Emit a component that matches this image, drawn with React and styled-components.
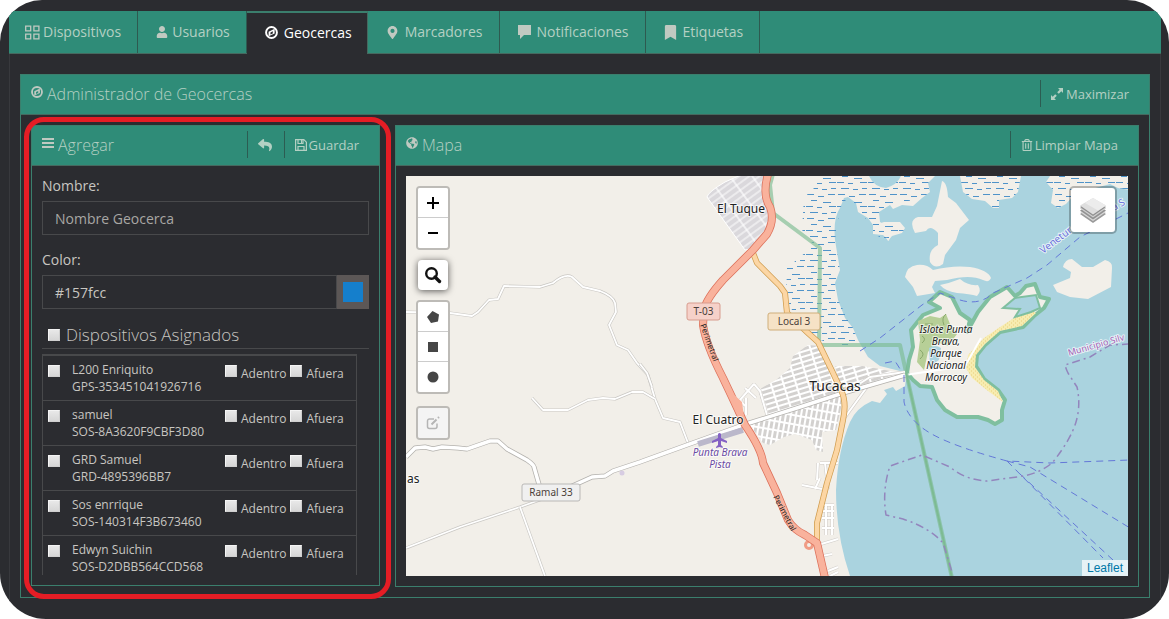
import React, { useState } from 'react';
import styled, { createGlobalStyle, css } from 'styled-components';
import {
  FaBookmark,
  FaGlobeAmericas,
  FaMapMarkerAlt,
  FaRegTrashAlt,
  FaReply,
  FaUser,
} from 'react-icons/fa';

const GlobalStyle = createGlobalStyle`
  :root {
    --green: #2f8c78;
    --green-line: #3b7f6d;
    --dark: #2b2c30;
    --line: #48494b;
    --text: #c8c6c1;
    --on-green: #b4d0c3;
    --font-sm: 12px;
    --font-md: 13px;
    --font-base: 14px;
    --font-lg: 16px;
    --font-xl: 17px;
  }

  * {
    box-sizing: border-box;
  }

  body {
    margin: 0;
    background: white;
    color: var(--text);
    font-family: 'Open Sans', 'Noto Sans', sans-serif;
    font-size: var(--font-base);
    line-height: 20px;
  }

  button,
  input {
    font: inherit;
    color: inherit;
    margin: 0;
  }
`;

const Page = styled.div`
  display: flex;
  flex-direction: column;
  min-height: 100vh;
  padding: 11px 8px 0 9px;
  overflow: hidden;
  background: var(--dark);
  border-radius: 42px 42px 46px 46px;
`;

const TabBar = styled.nav`
  display: flex;
  height: 43px;
  background: var(--green);
  border-bottom: 1px solid #46695f;
`;

const Tab = styled.a`
  display: flex;
  align-items: center;
  gap: 3px;
  height: 42px;
  padding: 0 16px;
  border-right: 1px solid #2e5a50;
  color: var(--on-green);
  text-decoration: none;

  ${({ $active }) =>
    $active &&
    css`
      height: 43px;
      padding: 0 15px 2px 16px;
      border-top: 2px solid var(--green-line);
      border-right-color: #46695f;
      background: var(--dark);
      color: white;
    `}
`;

const TabIcon = styled.span`
  display: flex;
  justify-content: center;
  width: ${({ $wide }) => ($wide ? '18px' : '15px')};
  color: ${({ $active }) => ($active ? 'white' : '#c0c9c1')};
`;

const Content = styled.main`
  flex: 1;
  padding: 20px 10px;
  border: 1px solid #38393d;
  border-width: 0 1px;
`;

const Panel = styled.section`
  position: relative;
  min-width: 0;
  border: 1px solid var(--green-line);
`;

const PanelHeader = styled.header`
  display: flex;
  align-items: center;
  justify-content: space-between;
  height: 40px;
  padding: 0 10px 2px;
  background: var(--green);
  border-bottom: 1px solid #46695f;
  color: #c0c9c1;
`;

const PanelTitle = styled.h2`
  display: flex;
  align-items: center;
  gap: 4px;
  margin: 0;
  color: var(--on-green);
  font-size: var(--font-lg);
  font-weight: 300;

  svg {
    margin-bottom: 4px;
    color: #c0c9c1;
  }
`;

const Actions = styled.div`
  display: flex;
`;

const Action = styled.button`
  display: flex;
  align-items: center;
  gap: 2px;
  min-width: 37px;
  height: 27px;
  padding: 0 10px;
  background: none;
  border: 0;
  border-left: 1px solid #2c5c52;
  color: var(--on-green);
  font-size: var(--font-md);
  cursor: pointer;
`;

const PanelBody = styled.div`
  padding: 10px;
`;

const Columns = styled.div`
  display: grid;
  grid-template-columns: 349px minmax(0, 1fr);
  align-items: start;
  gap: 15px;
  padding: 10px;
`;

const Highlight = styled.div`
  position: absolute;
  inset: -9px -12px -14px -8px;
  border: 5px solid #e51d25;
  border-radius: 20px;
  pointer-events: none;
`;

const Field = styled.div`
  display: flex;
  flex-direction: column;
  gap: 5px;
  margin-bottom: 15px;
`;

const InputGroup = styled.div`
  display: flex;
`;

const TextInput = styled.input`
  flex: 1;
  min-width: 0;
  height: 34px;
  padding: 0 12px;
  background: var(--dark);
  border: 1px solid var(--line);
  outline: none;

  &::placeholder {
    color: #a8a7a4;
    opacity: 1;
  }
`;

const ColorButton = styled.button`
  display: flex;
  align-items: center;
  justify-content: center;
  width: 32px;
  height: 34px;
  padding: 0;
  background: #5c5756;
  border: 0;
`;

const Swatch = styled.span`
  width: 20px;
  height: 20px;
  background: #157fcc;
`;

const AssignedTitle = styled.label`
  display: flex;
  align-items: center;
  gap: 6px;
  height: 25px;
  padding: 0 0 3px 6px;
  border-bottom: 1px solid var(--line);
  font-size: var(--font-xl);
  font-weight: 300;
`;

const Check = styled.input.attrs({ type: 'checkbox' })`
  appearance: none;
  flex-shrink: 0;
  width: 12px;
  height: 12px;
  background: linear-gradient(#e8e8e8, #d6d6d6);
  border: 1px solid;
  border-color: #f4f4f4 #cfcfcf #cfcfcf #f4f4f4;

  &:checked {
    background: #157fcc;
  }
`;

const DeviceList = styled.div`
  height: 221px;
  margin-top: 5px;
  padding-right: 12px;
  overflow: hidden;
`;

const DeviceTable = styled.table`
  width: 100%;
  border: 1px solid var(--line);
  border-top-width: 2px;
  border-spacing: 0;
  table-layout: fixed;
  font-size: var(--font-sm);
  line-height: 17px;
`;

const Cell = styled.td`
  width: ${({ $width }) => $width || 'auto'};
  height: 45px;
  padding: ${({ $pad }) => $pad || '5px 0 0'};
  border-bottom: 1px solid var(--line);
  vertical-align: top;
  white-space: nowrap;
`;

const DeviceName = styled.label`
  display: block;
`;

const Option = styled.label`
  display: inline-flex;
  align-items: flex-start;
  gap: 4px;
  margin-right: 4px;
`;

const MapBox = styled.div`
  position: relative;
  height: 400px;
  overflow: hidden;
  background: #f2efe9;
`;

const MapSvg = styled.svg`
  display: block;
  width: 100%;
  height: 100%;
  font-family: 'Noto Sans', 'Open Sans', sans-serif;
`;

const MapLabel = styled.text`
  fill: ${({ $color }) => $color || '#222'};
  font-size: ${({ $size }) => $size || 12}px;
  font-style: ${({ $italic }) => ($italic ? 'italic' : 'normal')};
  paint-order: stroke;
  stroke: ${({ $halo }) => $halo || 'rgba(255, 255, 255, 0.7)'};
  stroke-width: 2px;
  stroke-linejoin: round;
  text-anchor: ${({ $anchor }) => $anchor || 'middle'};
`;

const Controls = styled.div`
  position: absolute;
  top: 10px;
  left: 10px;
  display: flex;
  flex-direction: column;
  gap: 10px;
`;

const ControlBar = styled.div`
  width: 34px;
  overflow: hidden;
  border: 2px solid #bdbbb7;
  border-radius: 4px;

  & + & {
    margin-top: 2px;
  }
`;

const ControlButton = styled.button`
  display: flex;
  align-items: center;
  justify-content: center;
  width: 30px;
  height: 30px;
  padding: 0;
  background: white;
  border: 0;
  color: #464646;

  &:not(:last-child) {
    border-bottom: 1px solid #ccc;
  }

  &:disabled {
    background: #f4f4f4;
    color: #b5b5b5;
  }
`;

const SearchButton = styled(ControlButton)`
  margin: 0 2px;
  border-radius: 4px;
  box-shadow: 0 1px 7px rgba(0, 0, 0, 0.65);
  color: #111;

  &:not(:last-child) {
    border-bottom: 0;
  }
`;

const LayersButton = styled.button`
  position: absolute;
  top: 10px;
  right: 11px;
  display: flex;
  align-items: center;
  justify-content: center;
  width: 48px;
  height: 48px;
  padding: 0;
  background: white;
  background-clip: padding-box;
  border: 2px solid rgba(0, 0, 0, 0.25);
  border-radius: 5px;
`;

const Attribution = styled.a`
  position: absolute;
  right: 0;
  bottom: 0;
  padding: 0 5px;
  background: rgba(255, 255, 255, 0.7);
  color: #0078a8;
  font: 12px/16px 'Liberation Sans', Arial, sans-serif;
  text-decoration: none;
`;

const GridIcon = () => (
  <svg width="15" height="15" viewBox="0 0 15 15" fill="none" stroke="currentColor">
    <path
      d="M.7 1.200h5v4.600h-5zM8.900 1.200h5v4.600h-5zM.7 9.200h5v4.600h-5zM8.900 9.200h5v4.600h-5z"
      strokeWidth="1.300"
    />
  </svg>
);

const CompassIcon = ({ size }) => (
  <svg width={size} height={size} viewBox="0 0 12 12" fill="none" stroke="currentColor">
    <circle cx="6" cy="6" r="5" strokeWidth="1.800" />
    <path
      d="M8.900 2.600V7L3.300 9.500V5.200zM5 5.900v2l2.200-1V4.900z"
      fill="currentColor"
      fillRule="evenodd"
      stroke="none"
    />
  </svg>
);

const BarsIcon = () => (
  <svg width="12" height="12" viewBox="0 0 12 12" stroke="currentColor" strokeWidth="2">
    <path d="M0 2h12M0 6h12M0 10h12" />
  </svg>
);

const SaveIcon = () => (
  <svg width="12" height="12" viewBox="0 0 12 12" fill="none" stroke="currentColor">
    <path d="M.6.6h8.200l2.600 2.600v8.200H.6z" strokeWidth="1.200" />
    <path d="M3 11V7.500h6V11M3 1v3.500h5V1" strokeWidth="1.200" />
    <path d="M6.500 1v3" />
  </svg>
);

const CommentIcon = () => (
  <svg width="15" height="14" viewBox="0 0 15 14" fill="currentColor">
    <path d="M1 0h13v10H7l-4 4v-4H1z" />
  </svg>
);

const MaximizeIcon = () => (
  <svg width="13" height="12" viewBox="0 0 13 12" fill="currentColor">
    <path d="M12 0v5l-1.700-1.700-2.500 2.500-1.600-1.600 2.500-2.500L7 0zM0 12V7l1.700 1.700 2.500-2.500 1.600 1.600-2.500 2.500L5 12z" />
  </svg>
);

const SearchIcon = () => (
  <svg width="18" height="18" viewBox="0 0 18 18" fill="none" stroke="currentColor">
    <circle cx="7.500" cy="7.500" r="5.300" strokeWidth="2.400" />
    <path d="M11 11l4.500 4.500" strokeWidth="3.400" strokeLinecap="round" />
  </svg>
);

const EditIcon = () => (
  <svg width="14" height="14" viewBox="0 0 14 14" fill="none" stroke="currentColor">
    <path d="M8 3H3.500A2 2 0 0 0 1.500 5v5.500a2 2 0 0 0 2 2H9a2 2 0 0 0 2-2V7.500" strokeWidth="1.500" />
    <path d="M5.500 8.500L10.500 3.500M12 2l1-1" strokeWidth="2" />
  </svg>
);

const LayersIcon = () => (
  <svg width="28" height="28" viewBox="0 0 28 28">
    <path d="M1 18l13-8 13 8-13 9z" fill="#9a9a9a" />
    <path d="M1 16l13-8 13 8-13 9z" fill="#d8d8d8" />
    <path d="M1 14.500l13-8 13 8-13 9z" fill="#929292" />
    <path d="M1 12.500l13-8 13 8-13 9z" fill="#cfcfcf" />
    <path d="M1 11l13-8 13 8-13 9z" fill="#8e8e8e" />
    <path d="M1 9.500L14 2l13 7.500-13 9z" fill="#dedede" />
    <path d="M6 7L14 2l13 7.500-8 5z" fill="#ececec" />
  </svg>
);

const tabs = [
  { label: 'Dispositivos', icon: <GridIcon /> },
  { label: 'Usuarios', icon: <FaUser size={12} /> },
  { label: 'Geocercas', icon: <CompassIcon size={13} />, wide: true },
  { label: 'Marcadores', icon: <FaMapMarkerAlt size={13} />, wide: true },
  { label: 'Notificaciones', icon: <CommentIcon />, wide: true },
  { label: 'Etiquetas', icon: <FaBookmark size={15} />, wide: true },
];

const devices = [
  { name: 'L200 Enriquito', code: 'GPS-353451041926716' },
  { name: 'samuel', code: 'SOS-8A3620F9CBF3D80' },
  { name: 'GRD Samuel', code: 'GRD-4895396BB7' },
  { name: 'Sos enrrique', code: 'SOS-140314F3B673460' },
  { name: 'Edwyn Suichin', code: 'SOS-D2DBB564CCD568' },
];

const WATER =
  'M848 197L856 203 858 212 868 218 873 225 873 234 883 235 889 241 890 228 880 222 879 212 890 205 893 209 902 205 913 206 922 198 930 192 928 183 935 176H1140V576H850Q836 535 836 490 838 450 850 422 856 408 872 401L880 403 887 394 884 390 893 387 896 391 905 386 906 378 900 371 888 368 880 366 868 357 858 340 853 328 845 318 838 300 835 283 840 270 838 258 835 240Q833 218 840 208L844 198Z';

const MARSH =
  'M818 176L813 190 804 197 802 230 812 242 806 252 787 268 786 300 797 318 815 338 835 345 860 345 853 328 838 300 835 283 840 270 835 240 840 208 848 197 858 212 873 225 873 234 889 241 890 228 880 222 879 212 890 205 922 198 930 192 928 183 935 176Z';

const ISLAND =
  'M907 373L909 360 913 347 911 330 923 315 940 308 929 302 940 292 952 297 960 313 970 320 967 332 978 312 990 297 1007 287 1015 296 1020 293 1026 286 1035 284 1040 297 1049 299 1044 308 1034 316 1023 327 1000 332 985 345 977 355 976 366 984 379 998 390 1005 400 1002 410 1002 420 995 424 988 420 978 417 957 417 945 410 937 400 932 387 920 386 913 380Z';

const ISLETS = [
  'M942 181Q947 182 948 197L956 203 969 220 960 228 956 240 945 255 943 264Q935 270 930 262 928 250 938 245L938 233Q930 224 926 231L915 233Q908 220 918 217L932 217 937 206Z',
  'M905 277Q907 266 917 265 927 264 933 270 953 265 970 267 988 270 991 278 989 283 983 280 970 274 947 280L935 281 932 287 935 293 917 296 913 287Z',
  'M940 285Q950 283 960 279 968 286 978 285 982 291 977 296 970 294 957 293 945 291 940 285Z',
  'M1053 285L1070 278 1071 272 1063 267Q1065 259 1072 259L1082 267 1093 267 1105 260Q1113 262 1112 268L1111 287 1088 299 1070 297 1057 292Z',
];

const MARSH_ISLETS = [
  'M960 176L963 192 972 199 985 201 993 208 999 208 999 200 1012 198 1018 192 1021 176Z',
  'M1050 176L1046 182 1053 190 1051 203 1058 208 1066 204 1074 195 1088 190 1110 184 1118 188 1130 190V176Z',
  'M878 224L884 222 900 222 905 228 902 233 892 236 888 241 885 235 878 234Z',
];

const THIN_ROADS = [
  'M406 312L450 313 472 316 478 312 489 300 498 299 504 286 540 287 553 283Q565 273 572 277L583 287 600 291Q613 296 615 303L616 312 609 325 617 345 628 350 637 363 648 375 655 399 663 418 680 422 688 443',
  'M532 398L543 410 568 410 588 400 603 398 615 399 632 392 643 392 655 399',
  'M640 364L647 373 652 387',
  'M406 548L460 527 520 507 545 498',
  'M520 507L545 576',
];

const WHITE_ROADS = [
  'M406 457L415 448 425 447 433 449 442 447 458 448 467 449 490 441 498 441 507 449 527 460Q534 465 534 467L540 488',
  'M570 487L592 477 605 476 613 471 640 462 687 445 743 425 800 407 843 393 905 375',
];

const STREETS =
  'M843 393L867 387 843 420 M818 463L817 480M802 485L822 489M820 463H838M825 463L828 489M822 505H834M822 511H834M822 518H834M826 505V535M832 505V535M822 528H834M818 545L838 539M822 556L832 554M828 571L838 567M830 576L838 572M845 393L870 377 905 372M820 478L815 489M754 384L740 400 745 406M745 388L756 398M754 384L760 391 767 415M746 398V415';

const MAIN_ROAD =
  'M768 174Q762 195 770 207 775 220 767 234L753 250 723 280Q706 299 704 310L703 325Q706 345 723 378L732 397 745 425Q762 450 763 463L777 493 788 520Q794 530 805 535L817 543 825 578';

const LOCAL_ROAD =
  'M753 253L757 263 780 286 785 293 787 313 807 332 818 342 833 373 841 390Q847 402 843 420L837 450 827 483 817 523V543';

const FERRIES = [
  'M860 351L880 338 922 305 940 293 960 300Q980 306 993 293L1027 278 1047 265 1080 237 1130 212',
  'M904 375V402Q908 420 930 433T1007 461L1050 463 1130 460',
  'M1007 461L1030 467 1130 528',
  'M1007 461L1103 558',
  'M1020 474L1113 560',
  'M885 363L895 361 902 372',
];

const Label = ({ x, y, lines, step = 12, ...rest }) =>
  lines.map((line, i) => (
    <MapLabel key={line} x={x} y={y + i * step} {...rest}>
      {line}
    </MapLabel>
  ));

const RoadSign = ({ x, y, width, fill, stroke, children }) => (
  <g>
    <rect x={x} y={y} width={width} height="17" rx="2" fill={fill} stroke={stroke} />
    <MapLabel x={x + width / 2} y={y + 12} $size={10} $halo="none" $color="#4b3f3a">
      {children}
    </MapLabel>
  </g>
);

const StreetMap = () => (
  <MapSvg viewBox="406 176 722 400" preserveAspectRatio="xMidYMid slice">
    <defs>
      <pattern id="marsh" width="31" height="24" patternUnits="userSpaceOnUse">
        <path
          d="M1 2.500h7M12 4.500h6M22 2.500h7M5 8.500h6M17 10.500h8M0 14.500h7M11 15.500h5M23 14.500h7M4 20.500h8M16 21.500h5M25 20.500h5"
          stroke="#4f93c9"
        />
      </pattern>
      <pattern
        id="blocks"
        width="12"
        height="5"
        patternUnits="userSpaceOnUse"
        patternTransform="rotate(-17)"
      >
        <path d="M0 0H12V5H0z" fill="#d3d1cf" />
        <path d="M0 1H12M1 0V5" stroke="white" strokeWidth="2" />
      </pattern>
      <pattern
        id="blocksSouth"
        width="5"
        height="9"
        patternUnits="userSpaceOnUse"
        patternTransform="rotate(10)"
      >
        <path d="M0 0H5V9H0z" fill="#d3d1cf" />
        <path d="M0 1H5M1 0V9" stroke="white" strokeWidth="2" />
      </pattern>
      <pattern
        id="tuque"
        width="18"
        height="6"
        patternUnits="userSpaceOnUse"
        patternTransform="rotate(-36)"
      >
        <path d="M0 0H18V6H0z" fill="#dad8dc" />
        <path d="M0 1H18M1 0V6" stroke="white" strokeWidth="1.200" />
      </pattern>
      <pattern id="sand" width="4" height="4" patternUnits="userSpaceOnUse">
        <path d="M0 0H4V4H0z" fill="#f7ecb0" />
        <path d="M1 1h1M3 3h1" stroke="#e8cf7c" />
      </pattern>
    </defs>

    <rect x="406" y="176" width="724" height="400" fill="#f2efe9" />
    <path d={WATER} fill="#aad3df" />
    <path d={MARSH} fill="url(#marsh)" />
    <path d="M869 176Q874 187 886 188 897 185 901 176Z" fill="#aad3df" />
    {ISLETS.map((d) => (
      <path key={d} d={d} fill="#f2efe9" />
    ))}
    {MARSH_ISLETS.map((d) => (
      <g key={d}>
        <path d={d} fill="#f2efe9" />
        <path d={d} fill="url(#marsh)" />
      </g>
    ))}

    <path d={ISLAND} fill="#f2efe9" stroke="#7fbf9f" strokeWidth="4" strokeLinejoin="round" />
    <path
      d="M918 321L930 316 940 318 946 314 950 324 957 334 948 346 936 342 928 352 924 370 917 362 920 340Z"
      fill="#b7cf97"
    />
    <path d="M922 336q5 3 0 7M920 350q6 4 0 9M944 325q-3-7 2-11M925 324h8" fill="none" stroke="#8aa86c" />
    <path d="M929 348q6-4 12 0l-2 12-9 6z" fill="#aad3df" />
    <path
      d="M984 338L1000 327 1014 318 1030 310 1036 313 1022 326 1000 331 985 344 976 355 975 367 984 380 998 391 1003 402 988 391 972 378 966 368 968 355Z"
      fill="url(#sand)"
    />
    <path
      d="M1003 308L1015 298 1036 295 1040 308 1031 312 1015 317 1020 309Z"
      fill="#aad3df"
      stroke="#7fbf9f"
      strokeWidth="2"
    />
    <path d="M981 338L965 366 905 375" fill="none" stroke="white" strokeWidth="2" />

    <g fill="none" stroke="#7dbb92" strokeLinejoin="round">
      <path
        d="M773 174L770 185 773 213 820 248 819 345H900L906 372 952 578"
        strokeWidth="4"
        opacity="0.65"
      />
      <path d="M906 372L952 578" strokeWidth="2" />
    </g>

    <path
      d="M707 197Q708 192 725 182L743 174H767L765 195 771 207 769 226 750 249 745 250Z"
      fill="url(#tuque)"
      stroke="white"
    />
    <path
      d="M758 390L776 380 790 368 793 356 808 345 820 346 826 360 834 375 880 370 888 377 870 386 841 395 800 407 766 416Z"
      fill="url(#blocks)"
    />
    <path d="M835 366L862 366 880 369 905 374 884 382 843 394Z" fill="url(#blocks)" />
    <path
      d="M750 425L800 408 842 395 841 408 836 430 822 432 823 452 816 450 812 440 795 434 784 437 770 445 763 443Z"
      fill="url(#blocksSouth)"
    />
    <g fill="none" strokeLinejoin="round">
      <path d={STREETS} stroke="#cfccc8" strokeWidth="3" />
      <path d={STREETS} stroke="white" strokeWidth="2" />
      {THIN_ROADS.map((d) => (
        <g key={d}>
          <path d={d} stroke="#c9c7c3" strokeWidth="3" />
          <path d={d} stroke="white" strokeWidth="1.800" />
        </g>
      ))}
      {WHITE_ROADS.map((d) => (
        <g key={d}>
          <path d={d} stroke="#b3b1ad" strokeWidth="5" />
          <path d={d} stroke="white" strokeWidth="3.500" />
        </g>
      ))}
      <path d="M698 444L743 430" stroke="#bbb8cb" strokeWidth="6" />
      <path d={LOCAL_ROAD} stroke="#cf9c4e" strokeWidth="6" />
      <path d={LOCAL_ROAD} stroke="#fcd6a4" strokeWidth="4.500" />
      <circle cx="809" cy="545" r="3.500" stroke="#f09c85" strokeWidth="3" />
      <path d={MAIN_ROAD} stroke="#dc705a" strokeWidth="8" />
      <path d={MAIN_ROAD} stroke="#f9b29c" strokeWidth="6.500" />
      <path d="M730 391L742 402 745 425Q757 436 761 448L762 460 748 430Z" fill="#f9b29c" />
      {FERRIES.map((d) => (
        <path key={d} d={d} stroke="#6478d8" strokeDasharray="7 5" />
      ))}
      <path
        d="M1130 344L1110 345 1090 357 1065 365Q1066 369 1068 373L1077 387Q1081 405 1076 422T1053 462Q1040 474 1017 477L987 481Q965 480 950 467L922 455 890 466Q882 490 886 515L903 519Q930 528 943 543L952 572"
        stroke="#9385bd"
        strokeWidth="1.500"
        strokeDasharray="8 4 2 4"
      />
    </g>

    <path
      d="M718 434q1.500-2 3 0v4l6 3v2l-6-2v4l2 2v1l-3.500-1-3.500 1v-1l2-2v-4l-6 2v-2l6-3z"
      fill="#8461c4"
    />
    <circle cx="622" cy="473" r="2.500" fill="#d7cce2" />

    <RoadSign x={687} y={303} width={33} fill="#f6d1c9" stroke="#d79c8e">
      T-03
    </RoadSign>
    <RoadSign x={768} y={313} width={52} fill="#f6e2c6" stroke="#cfae7a">
      Local 3
    </RoadSign>
    <RoadSign x={522} y={484} width={58} fill="#f0f0f0" stroke="#b9b8b6">
      Ramal 33
    </RoadSign>

    <Label x={741} y={213} lines={['El Tuque']} />
    <Label x={835} y={391} lines={['Tucacas']} $size={14} />
    <Label x={718} y={424} lines={['El Cuatro']} />
    <Label x={407} y={483} lines={['as']} $anchor="start" />
    <Label x={720} y={456} lines={['Punta Brava', 'Pista']} $size={10} $italic $color="#6b4aa3" />
    <Label
      x={946}
      y={333}
      lines={['Islote Punta', 'Brava,', 'Parque', 'Nacional', 'Morrocoy']}
      $size={10}
      $italic
    />
    <g transform="translate(700 325) rotate(70)">
      <MapLabel $size={8} $anchor="start" $halo="none">
        Perimetral
      </MapLabel>
    </g>
    <g transform="translate(773 497) rotate(62)">
      <MapLabel $size={8} $anchor="start" $halo="none">
        Perimetral
      </MapLabel>
    </g>
    <g transform="translate(1043 254) rotate(-37)">
      <MapLabel $size={10} $anchor="start" $color="#6a72dc">
        Venetur
      </MapLabel>
    </g>
    <g transform="translate(1114 211) rotate(-30)">
      <MapLabel $size={10} $anchor="start" $color="#6a72dc">
        a S
      </MapLabel>
    </g>
    <g transform="translate(1069 356) rotate(-16)">
      <MapLabel $size={9} $anchor="start" $color="#a35fb5">
        Municipio Silv
      </MapLabel>
    </g>
  </MapSvg>
);

const GeofenceForm = () => {
  const [name, setName] = useState('');
  const [color, setColor] = useState('#157fcc');

  return (
    <PanelBody as="form">
      <Field>
        <label htmlFor="name">Nombre:</label>
        <InputGroup>
          <TextInput
            id="name"
            placeholder="Nombre Geocerca"
            value={name}
            onChange={(e) => setName(e.target.value)}
          />
        </InputGroup>
      </Field>
      <Field>
        <label htmlFor="color">Color:</label>
        <InputGroup>
          <TextInput id="color" value={color} onChange={(e) => setColor(e.target.value)} />
          <ColorButton type="button" aria-label="Color">
            <Swatch />
          </ColorButton>
        </InputGroup>
      </Field>
      <AssignedTitle>
        <Check />
        Dispositivos Asignados
      </AssignedTitle>
      <DeviceList>
        <DeviceTable>
          <tbody>
            {devices.map(({ name: device, code }) => (
              <tr key={code}>
                <Cell $width="29px" $pad="8px 5px 0">
                  <Option as="span">
                    <Check id={code} />
                  </Option>
                </Cell>
                <Cell>
                  <DeviceName htmlFor={code}>
                    {device}
                    <br />
                    {code}
                  </DeviceName>
                </Cell>
                <Cell $width="131px" $pad="8px 0 0">
                  <Option>
                    <Check />
                    Adentro
                  </Option>
                  <Option>
                    <Check />
                    Afuera
                  </Option>
                </Cell>
              </tr>
            ))}
          </tbody>
        </DeviceTable>
      </DeviceList>
    </PanelBody>
  );
};

const MapView = () => (
  <MapBox>
    <StreetMap />
    <Controls>
      <ControlBar>
        <ControlButton aria-label="Acercar">
          <svg width="14" height="14" viewBox="0 0 14 14" stroke="black" strokeWidth="2">
            <path d="M1 7h12M7 1v12" />
          </svg>
        </ControlButton>
        <ControlButton aria-label="Alejar">
          <svg width="12" height="4" viewBox="0 0 12 4" stroke="black" strokeWidth="2">
            <path d="M1 2h10" />
          </svg>
        </ControlButton>
      </ControlBar>
      <SearchButton aria-label="Buscar">
        <SearchIcon />
      </SearchButton>
      <ControlBar>
        <ControlButton aria-label="Polígono">
          <svg width="12" height="12" viewBox="0 0 12 12" fill="currentColor">
            <path d="M5.500 0L12 3.500 11 10.500 4 12 0 6z" />
          </svg>
        </ControlButton>
        <ControlButton aria-label="Rectángulo">
          <svg width="10" height="10" fill="currentColor">
            <path d="M0 0h10v10H0z" />
          </svg>
        </ControlButton>
        <ControlButton aria-label="Círculo">
          <svg width="12" height="12" fill="currentColor">
            <circle cx="6" cy="6" r="5.500" />
          </svg>
        </ControlButton>
      </ControlBar>
      <ControlBar>
        <ControlButton aria-label="Editar" disabled>
          <EditIcon />
        </ControlButton>
      </ControlBar>
    </Controls>
    <LayersButton aria-label="Capas">
      <LayersIcon />
    </LayersButton>
    <Attribution href="#leaflet">Leaflet</Attribution>
  </MapBox>
);

const App = () => {
  const [active, setActive] = useState('Geocercas');

  return (
    <>
      <GlobalStyle />
      <Page>
        <TabBar>
          {tabs.map(({ label, icon, wide }) => (
            <Tab
              key={label}
              href={`#${label}`}
              $active={label === active}
              onClick={() => setActive(label)}
            >
              <TabIcon $wide={wide} $active={label === active}>
                {icon}
              </TabIcon>
              {label}
            </Tab>
          ))}
        </TabBar>
        <Content>
          <Panel>
            <PanelHeader>
              <PanelTitle>
                <CompassIcon size={12} />
                Administrador de Geocercas
              </PanelTitle>
              <Actions>
                <Action>
                  <MaximizeIcon />
                  Maximizar
                </Action>
              </Actions>
            </PanelHeader>
            <Columns>
              <Panel>
                <PanelHeader>
                  <PanelTitle>
                    <BarsIcon />
                    Agregar
                  </PanelTitle>
                  <Actions>
                    <Action aria-label="Volver">
                      <FaReply size={14} />
                    </Action>
                    <Action>
                      <SaveIcon />
                      Guardar
                    </Action>
                  </Actions>
                </PanelHeader>
                <GeofenceForm />
                <Highlight />
              </Panel>
              <Panel>
                <PanelHeader>
                  <PanelTitle>
                    <FaGlobeAmericas size={12} />
                    Mapa
                  </PanelTitle>
                  <Actions>
                    <Action>
                      <FaRegTrashAlt size={12} />
                      Limpiar Mapa
                    </Action>
                  </Actions>
                </PanelHeader>
                <PanelBody>
                  <MapView />
                </PanelBody>
              </Panel>
            </Columns>
          </Panel>
        </Content>
      </Page>
    </>
  );
};

export default App;
